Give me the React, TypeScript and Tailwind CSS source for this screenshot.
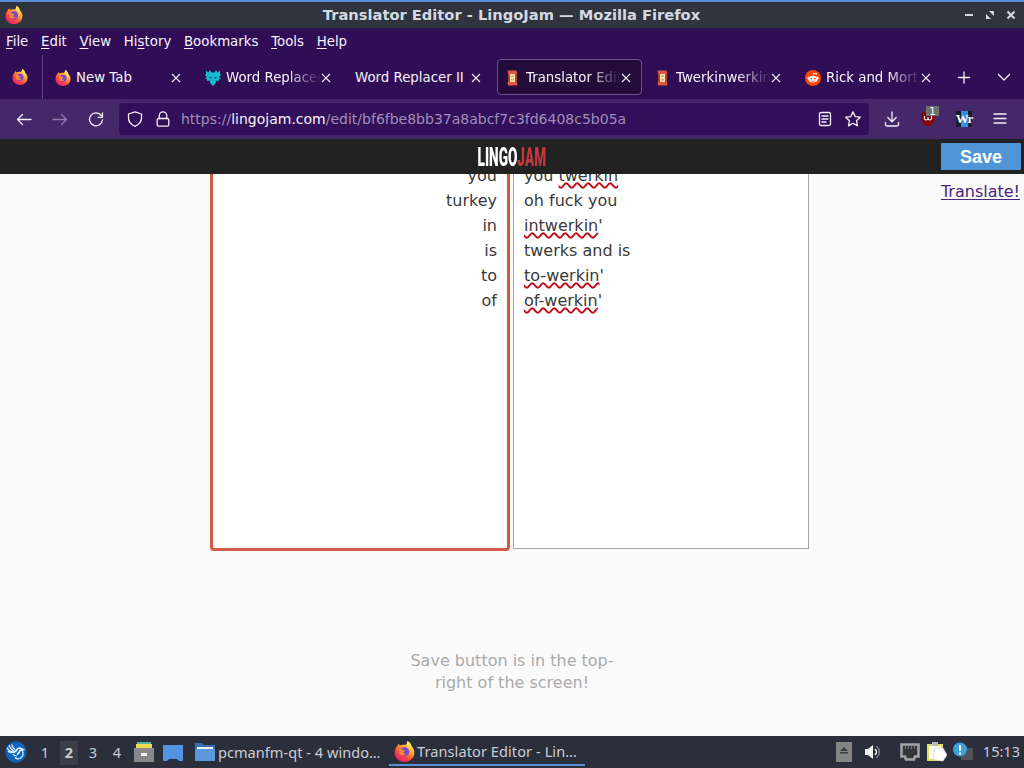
import type { ReactNode } from "react";

type IconProps = { className?: string };

function FirefoxIcon({ className = "size-4" }: IconProps) {
    return (
        <svg viewBox="0 0 32 32" className={`shrink-0 ${className}`}>
            <defs>
                <linearGradient id="fxBody" x1="0.85" y1="0.1" x2="0.25" y2="0.95">
                    <stop offset="0" stopColor="#ffe24a" />
                    <stop offset="0.4" stopColor="#ff9a2c" />
                    <stop offset="0.7" stopColor="#fb4746" />
                    <stop offset="1" stopColor="#e8246f" />
                </linearGradient>
            </defs>
            <path
                d="M30 13c-1-3-3-5-4-6 0-3-3-6-6-7 1 3-1 4-2 6-4-1-7 0-9 1C8 6 8 5 8 4 6 5 5 7 4 9 2 11 1 14 1 18c0 8 7 14 15 14s15-6 15-14c0-2 0-4-1-5z"
                fill="url(#fxBody)"
            />
            <circle cx="16" cy="16.500" r="7" fill="#7748d8" />
            <path d="M8 13c2-1 5 0 6 1 1 0 2 0 3 1-1 1-3 1-3 3 1 2 3 2 5 1-2 4-9 4-11 0-1-2-1-4 0-6z" fill="#ff8a33" />
            <path d="M19 6c5 2 8 7 6 12 3-4 2-8 1-11 0-3-3-6-6-7 1 3-1 4-1 6z" fill="#ffe45a" />
        </svg>
    );
}

function WolfIcon() {
    return (
        <svg viewBox="0 0 16 16" className="size-4 shrink-0" fill="#14bccb">
            <path d="M1 .5l2.500 2L5 0l1.500 2.500h3L11 0l1.500 2.500 2.500-2L15 4l1 1-2 2 2 1.500-2 .5v2l-2.500-.5-1 3L8 16l-2.500-2.500-1-3L2 11V9L0 8.500 2 7 0 5l1-1z" />
            <path d="M4.500 6.500l2.500 1.700-2 .3zM11.500 6.500L9 8.200l2 .3z" fill="#2f0d58" />
        </svg>
    );
}

function ScrollIcon() {
    return (
        <svg viewBox="0 0 16 16" className="size-4 shrink-0">
            <path d="M3 2h9v12H3z" fill="#b8402f" />
            <path d="M2.500 .5h9l.5 3.500H3zM2.500 12h9.500l.5 3.500H3z" fill="#df5540" />
            <path d="M5 4h5v8H5z" fill="#f6e3b4" />
            <path d="M6 5.500h3v1.500H6zM6 9h3v1.500H6z" fill="#dba45c" />
        </svg>
    );
}

function RedditIcon() {
    return (
        <svg viewBox="0 0 16 16" className="size-4 shrink-0">
            <circle cx="8" cy="8" r="8" fill="#ff4500" />
            <circle cx="3.600" cy="8" r="1.200" fill="#fff" />
            <circle cx="12.400" cy="8" r="1.200" fill="#fff" />
            <ellipse cx="8" cy="9.200" rx="4.600" ry="3.300" fill="#fff" />
            <path d="M8 6l.7-2.800 2.300.5" stroke="#fff" strokeWidth="0.8" fill="none" />
            <circle cx="11.200" cy="3.800" r="0.900" fill="#fff" />
            <circle cx="6.200" cy="8.600" r="0.900" fill="#ff4500" />
            <circle cx="9.800" cy="8.600" r="0.900" fill="#ff4500" />
            <path d="M6 10.800q2 1.200 4 0" stroke="#ff4500" strokeWidth="0.700" fill="none" />
        </svg>
    );
}

function CloseIcon() {
    return (
        <svg viewBox="0 0 10 10" className="size-[10px] shrink-0" stroke="#f2ecf8" strokeWidth="1.100">
            <path d="M1 1l8 8M9 1L1 9" />
        </svg>
    );
}

function LineIcon({ children, className = "" }: { children: ReactNode; className?: string }) {
    return (
        <svg
            viewBox="0 0 16 16"
            className={`size-4 shrink-0 ${className}`}
            fill="none"
            stroke="currentColor"
            strokeWidth="1.300"
            strokeLinecap="round"
            strokeLinejoin="round"
        >
            {children}
        </svg>
    );
}

const MENUS = [
    { before: "", key: "F", after: "ile" },
    { before: "", key: "E", after: "dit" },
    { before: "", key: "V", after: "iew" },
    { before: "Hi", key: "s", after: "tory" },
    { before: "", key: "B", after: "ookmarks" },
    { before: "", key: "T", after: "ools" },
    { before: "", key: "H", after: "elp" },
];

const TABS = [
    { title: "New Tab", icon: <FirefoxIcon /> },
    { title: "Word Replacer", icon: <WolfIcon />, fade: true },
    { title: "Word Replacer II", icon: null },
    { title: "Translator Edit", icon: <ScrollIcon />, fade: true, active: true },
    { title: "Twerkinwerkin", icon: <ScrollIcon />, fade: true },
    { title: "Rick and Mort", icon: <RedditIcon />, fade: true },
];

const ROWS = [
    { from: "you", plain: "you ", typo: "twerkin", rest: "" },
    { from: "turkey", plain: "oh fuck you", typo: "", rest: "" },
    { from: "in", plain: "", typo: "intwerkin", rest: "'" },
    { from: "is", plain: "twerks and is", typo: "", rest: "" },
    { from: "to", plain: "", typo: "to-werkin", rest: "'" },
    { from: "of", plain: "", typo: "of-werkin", rest: "'" },
];

function TitleBar() {
    return (
        <div className="flex h-7 items-center border-t-2 border-[#5a8fd8] bg-[#2f343f] px-[5px]">
            <FirefoxIcon className="size-[18px]" />
            <div className="flex-1 pl-9 text-center text-[14.670px] font-bold leading-none text-[#d3dae3]">
                Translator Editor - LingoJam — Mozilla Firefox
            </div>
            <div className="flex items-center gap-[11px] pr-[3px] text-[#d3dae3]">
                <svg viewBox="0 0 10 10" className="size-[10px]"><path d="M1 4h8v2H1z" fill="currentColor" /></svg>
                <svg viewBox="0 0 10 10" className="size-[10px]" fill="currentColor">
                    <path d="M4 1h5v5zM1 4v5h5z" />
                </svg>
                <svg viewBox="0 0 10 10" className="size-[10px]" stroke="currentColor" strokeWidth="2">
                    <path d="M1.500 1.500l7 7M8.500 1.500l-7 7" />
                </svg>
            </div>
        </div>
    );
}

function TabStrip() {
    return (
        <div className="flex h-11 items-center">
            <div className="flex h-11 w-[43px] items-center border-r border-[#5d4381] pl-3">
                <FirefoxIcon />
            </div>
            <div className="ml-1 flex gap-[5px]">
                {TABS.map((tab, i) => (
                    <div
                        key={i}
                        className={`flex h-9 w-[145px] items-center rounded-[4px] border pl-[7px] pr-[10px] pt-px ${
                            tab.active ? "border-[#6e4f95] bg-[#230c39]" : "border-transparent"
                        }`}
                    >
                        {tab.icon && <span className="mr-[5px]">{tab.icon}</span>}
                        <span
                            className={`min-w-0 flex-1 overflow-hidden whitespace-nowrap ${
                                tab.fade ? "[mask-image:linear-gradient(to_right,black_65%,transparent_100%)]" : ""
                            }`}
                        >
                            {tab.title}
                        </span>
                        <CloseIcon />
                    </div>
                ))}
            </div>
            <LineIcon className="ml-[14px]"><path d="M2.500 8.500h11M8 3v11" /></LineIcon>
            <LineIcon className="ml-6"><path d="M2.500 5.500L8 11l5.500-5.500" /></LineIcon>
        </div>
    );
}

function NavBar() {
    return (
        <div className="flex h-10 items-center bg-[#452869] text-[#f5effb]">
            <div className="flex w-[119px] items-center gap-5 pl-4">
                <LineIcon><path d="M15 8.500H1.500M6.500 3.500l-5 5 5 5" /></LineIcon>
                <LineIcon className="text-[#8f79ab]"><path d="M1 8.500h13.500M9.500 3.500l5 5-5 5" /></LineIcon>
                <LineIcon><path d="M13.300 4.500A6.500 6.500 0 1 0 14.500 8.800M14.500 1.800v4.500H10" /></LineIcon>
            </div>
            <div className="flex h-8 w-[750px] items-center rounded-[4px] bg-[#311059] pl-2 pr-2">
                <LineIcon><path d="M8 .8L14.500 3v4c0 4-2.500 6.500-6.500 8.300C4 13.500 1.500 11 1.500 7V3z" /></LineIcon>
                <LineIcon className="ml-3">
                    <rect x="2.200" y="7.500" width="11.600" height="7.700" rx="1.500" />
                    <path d="M4.300 7.500V4.500a3.700 3.700 0 0 1 7.400 0v3" />
                </LineIcon>
                <span className="ml-[10px] flex-1 text-[14px] text-[#a18db9]">
                    https://<span className="text-[#f8f3fc]">lingojam.com</span>/edit/bf6fbe8bb37a8abcf7c3fd6408c5b05a
                </span>
                <LineIcon>
                    <rect x="2.500" y="1.500" width="11" height="13" rx="1.500" />
                    <path d="M5 5h6M5 8h6M5 11h4" />
                </LineIcon>
                <LineIcon className="ml-3">
                    <path d="M8 .8l2.200 4.800 5.100.6-3.800 3.500 1 5.200L8 12.300l-4.500 2.600 1-5.200L.7 6.200l5.100-.6z" />
                </LineIcon>
            </div>
            <LineIcon className="ml-[15px]"><path d="M8 1v9.500M3.800 6.500L8 10.700l4.200-4.200M1.500 11.500v2a1.500 1.500 0 0 0 1.500 1.500h10a1.500 1.500 0 0 0 1.500-1.500v-2" /></LineIcon>
            <div className="relative ml-5">
                <svg viewBox="0 0 16 16" className="size-4">
                    <path d="M8 0l7 2v5c0 5-3 7-7 9-4-2-7-4-7-9V2z" fill="#800610" />
                    <path d="M4.500 5v2.500q0 1.500 1.700 1.500T8 7.500V6v1.500q0 1.500 1.700 1.500t1.800-1.500V5" stroke="#fff" strokeWidth="1.100" fill="none" />
                </svg>
                <span className="absolute -top-[5px] left-[6px] h-[10px] w-[13px] bg-[#70706c] text-center text-[10px] leading-[11px] text-white">
                    1
                </span>
            </div>
            <div className="ml-5 flex size-4 items-center justify-center bg-[linear-gradient(to_right,#15202b_30%,#2e8ee6_30%_75%,#15202b_75%)] font-['Liberation_Serif',serif] text-[13px] font-bold tracking-[-1px] text-white">
                Wr
            </div>
            <LineIcon className="ml-5"><path d="M2 3h12M2 7.500h12M2 12h12" /></LineIcon>
        </div>
    );
}

function LingoJamPage() {
    return (
        <main className="flex h-[597px] flex-col bg-[#fafafa]">
            <header className="z-10 flex h-[35px] shrink-0 items-center justify-between bg-[#222] pr-[3px]">
                <div className="w-[83px]" />
                <div className="flex w-[70px] justify-center pt-px">
                    <span className="origin-center scale-x-[0.545] font-['Roboto',sans-serif] text-[25px] font-black leading-none text-white">
                        LINGO<span className="text-[#c2373d]">JAM</span>
                    </span>
                </div>
                <button className="h-[27px] w-20 rounded-[1px] bg-[#5095d5] pt-px font-['Liberation_Sans',sans-serif] text-[18px] font-bold leading-none text-white">
                    Save
                </button>
            </header>
            <div className="flex h-[377px] shrink-0 overflow-hidden pl-[210px] text-[16px] leading-[25px] text-[#3a3a3a]">
                <div className="-mt-[14px] h-[391px] w-[300px] rounded-[4px] border-[3px] border-[#d05c43] bg-white pr-[10px] text-right">
                    {ROWS.map(row => <div key={row.from}>{row.from}</div>)}
                </div>
                <div className="-mt-3 ml-[3px] h-[387px] w-[296px] border border-[#a5a5a5] bg-white pl-[10px]">
                    {ROWS.map(row => (
                        <div key={row.from} className="whitespace-pre">
                            {row.plain}
                            <span className="underline decoration-[#c00814] decoration-wavy decoration-[1.500px] underline-offset-[0.500px] [text-decoration-skip-ink:none]">
                                {row.typo}
                            </span>
                            {row.rest}
                        </div>
                    ))}
                </div>
                <a className="ml-auto mr-1 mt-[5px] text-[#4d2478] underline underline-offset-2">Translate!</a>
            </div>
            <p className="mx-auto mt-[99px] w-[230px] text-center text-[16px] leading-[22px] text-[#aaa]">
                Save button is in the top-right of the screen!
            </p>
        </main>
    );
}

function Taskbar() {
    return (
        <footer className="flex h-8 items-center bg-[#2b2f3b] font-['Noto_Sans',sans-serif] text-[14.550px] text-[#c8cdd6]">
            <svg viewBox="0 0 22 22" className="ml-[5px] size-[22px]" fill="none" stroke="#e8f3fc">
                <circle cx="11" cy="11" r="10.500" fill="#0a65bd" stroke="none" />
                <path d="M2 6.500q2 4 6 4.500M4 4q1 4 5 6M7 3.500q0 3 3 5" strokeWidth="1.200" />
                <path d="M3 10q4 3 8 0 1-3 4-3l3 1.500-3 1q-1 3-3 4" strokeWidth="1.700" />
                <path d="M17 8.500q3 6-2 9-3 1-5-1M8 13q1 2 4 2" strokeWidth="1.200" />
            </svg>
            <div className="ml-[9px] flex pt-[2px]">
                {[1, 2, 3, 4].map(n => (
                    <span
                        key={n}
                        className={`mr-[6px] flex h-6 w-[18px] items-center justify-center ${n === 2 ? "bg-[#393e49] font-bold" : ""}`}
                    >
                        {n}
                    </span>
                ))}
            </div>
            <svg viewBox="0 0 20 20" className="ml-[2px] size-5">
                <path d="M3 0h14v4H3z" fill="#4fb5a1" />
                <path d="M2 2h16v5H2z" fill="#efd957" />
                <path d="M0 6h20v14H0z" fill="#888" />
                <path d="M7 11h6v3H7z" fill="#f2f2f2" />
            </svg>
            <svg viewBox="0 0 20 16" className="ml-[9px] mt-[2px] h-4 w-5">
                <path d="M0 0h20v16h-4l-2-2H6l-2 2H0z" fill="#5294e2" />
            </svg>
            <svg viewBox="0 0 20 18" className="ml-3 h-[18px] w-5">
                <path d="M0 0h7l2 2h11v16H0z" fill="#3b6fae" />
                <path d="M0 6h20v12H0z" fill="#5a98dd" />
                <path d="M2 4h16v2H2z" fill="#eef3f8" />
            </svg>
            <span className="ml-[3px] w-[171px] whitespace-nowrap pt-[2px] tracking-[0.030px]">pcmanfm-qt - 4 windo…</span>
            <div className="flex h-[30px] w-[196px] items-center self-start border-b-2 border-[#5a8fd8] pl-[5px] pt-[3px]">
                <FirefoxIcon className="size-[21px]" />
                <span className="ml-[2px] whitespace-nowrap tracking-[0.080px]">Translator Editor - Lin…</span>
            </div>
            <div className="ml-auto flex items-center pr-1">
                <svg viewBox="0 0 16 20" className="h-5 w-4">
                    <path d="M0 0h16v20H0z" fill="#858585" />
                    <path d="M8 5l4 4H4zM4 10h8v1.500H4z" fill="#3d3f45" />
                </svg>
                <svg viewBox="0 0 16 16" className="ml-[13px] size-4">
                    <path d="M0 5h3l5-4v14l-5-4H0z" fill="#f4f4f4" />
                    <path d="M10 5q3 3 0 6" stroke="#eee" strokeWidth="1.500" fill="none" />
                    <path d="M11.500 2q6 6 0 12" stroke="#777b84" strokeWidth="1.500" fill="none" />
                </svg>
                <svg viewBox="0 0 20 18" className="ml-[19px] h-[18px] w-5">
                    <path d="M1.500 1.500h17v12H15l-1 3H6l-1-3H1.500z" fill="#34363b" stroke="#a5a5a5" strokeWidth="2.500" />
                    <path d="M5.500 3v3M8.500 3v3M11.500 3v3M14.500 3v3" stroke="#77797d" />
                </svg>
                <svg viewBox="0 0 20 20" className="ml-[7px] size-5">
                    <path d="M0 2h16v17H0z" fill="#dce05c" />
                    <path d="M2 4h12v13H2z" fill="#fafaf0" />
                    <path d="M5 0h6v4H5z" fill="#b8b8b8" />
                    <path d="M8 6h8l4 7-4 6-8-1-2-2z" fill="#fff" stroke="#cfcfc8" strokeWidth="0.700" />
                </svg>
                <svg viewBox="0 0 20 20" className="ml-[6px] size-5">
                    <path d="M8 6h12v12H8z" fill="#505257" />
                    <circle cx="7" cy="7.500" r="7" fill="#3f9fdb" />
                    <path d="M6 3h2v6H6zM6 10.500h2v2H6z" fill="#fff" />
                </svg>
                <span className="ml-[10px]">15:13</span>
            </div>
        </footer>
    );
}

export default function App() {
    return (
        <div className="h-[768px] w-[1024px] overflow-hidden bg-[#2f0e56] font-['DejaVu_Sans',sans-serif] text-[13.330px] text-[#f8f3fc]">
            <TitleBar />
            <nav className="flex h-[27px] items-center gap-[12.700px] pl-[6px]">
                {MENUS.map(menu => (
                    <span key={menu.after}>
                        {menu.before}
                        <u className="underline-offset-2">{menu.key}</u>
                        {menu.after}
                    </span>
                ))}
            </nav>
            <TabStrip />
            <NavBar />
            <LingoJamPage />
            <Taskbar />
        </div>
    );
}
